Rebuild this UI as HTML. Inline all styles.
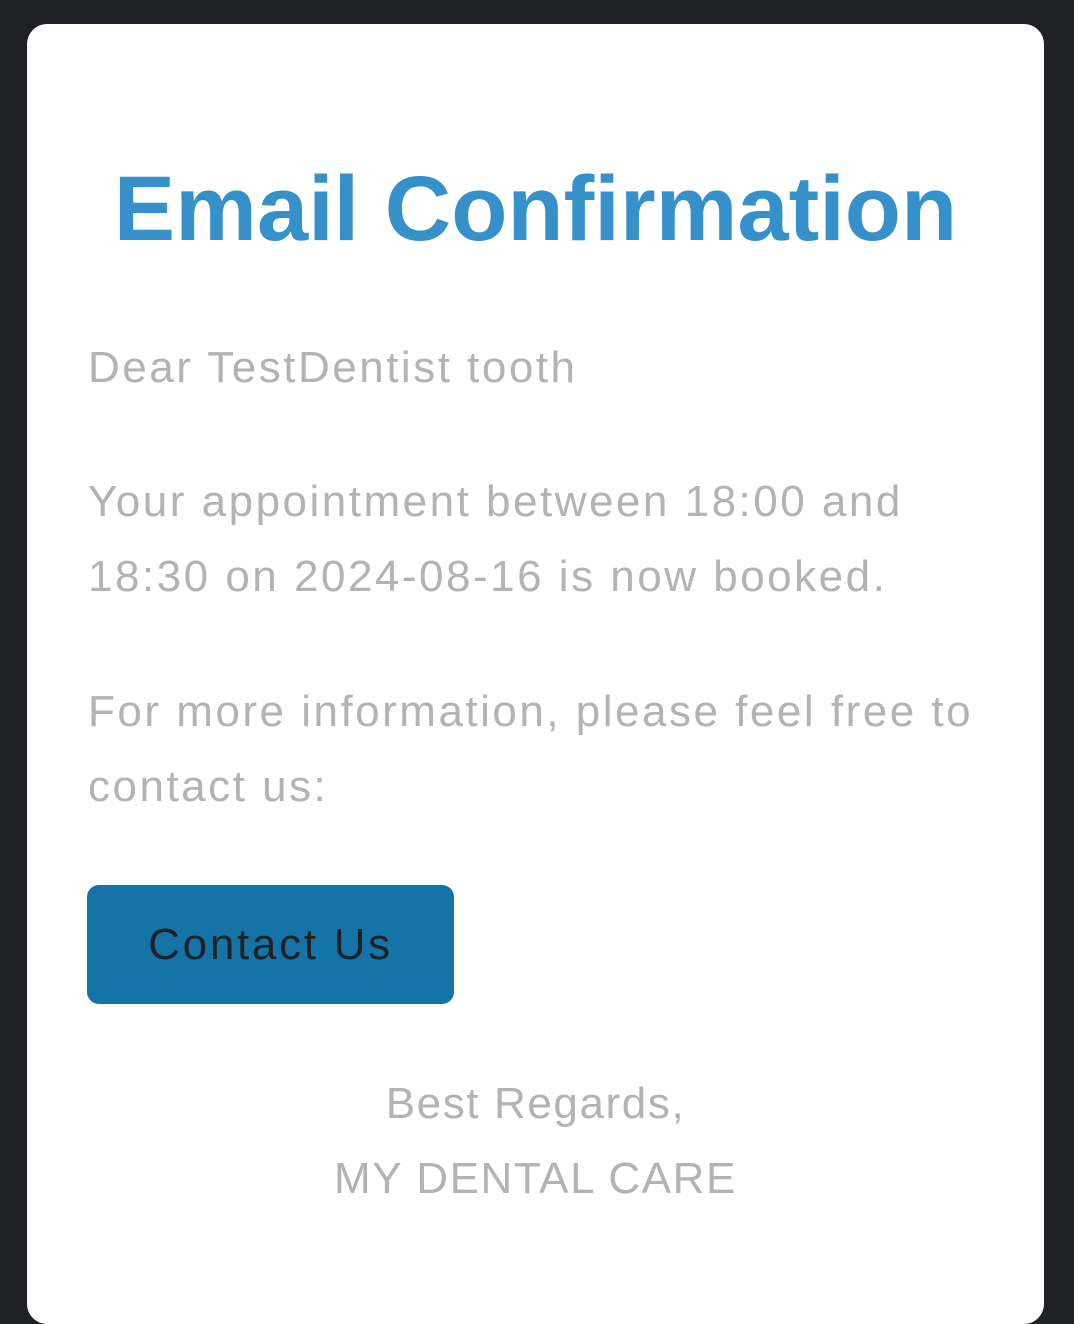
<!DOCTYPE html>
<html><head><style>
html,body{margin:0;padding:0;background:#202124;width:1074px;height:1277px;overflow:hidden;font-family:"Liberation Sans",sans-serif}
.card{position:absolute;left:27px;top:24px;width:1017px;height:1300px;background:#fff;border-radius:20px}
h1{position:absolute;left:0;width:1017px;top:130px;margin:0;text-align:center;color:#3690c9;font-size:92px;font-weight:bold;line-height:110px}
p{position:absolute;left:61px;margin:0;color:#b3b3b3;font-size:44px;line-height:75px;width:905px;letter-spacing:2.5px}
.btn{position:absolute;left:60px;top:861px;width:367px;height:119px;background:#1474a8;border-radius:12px;color:#1f2124;font-size:44px;line-height:119px;text-align:center;letter-spacing:2.7px}
.ft{position:absolute;left:0;width:1017px;top:1042px;text-align:center;color:#b3b3b3;font-size:44px;line-height:75px;letter-spacing:1.6px}
</style></head><body>
<div class="card">
<h1>Email Confirmation</h1>
<p style="top:306px">Dear TestDentist tooth</p>
<p style="top:440px">Your appointment between 18:00 and 18:30 on 2024-08-16 is now booked.</p>
<p style="top:650px">For more information, please feel free to contact us:</p>
<div class="btn">Contact Us</div>
<div class="ft">Best Regards,<br>MY DENTAL CARE</div>
</div>
</body></html>
